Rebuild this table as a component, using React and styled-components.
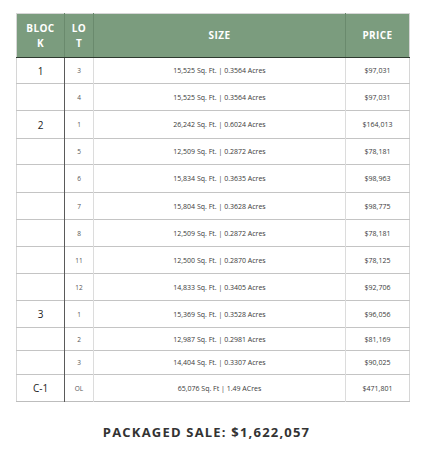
import React from "react";
import styled, { createGlobalStyle } from "styled-components";

const Global = createGlobalStyle`
  html, body { margin: 0; padding: 0; background: #fff; }
  body {
    font-family: "Open Sans", "Liberation Sans", sans-serif;
    -webkit-font-smoothing: antialiased;
  }
`;

const Page = styled.div`
  width: 439px;
  padding: 13px 0 0 16px;
  box-sizing: border-box;
`;

const Table = styled.table`
  border-collapse: collapse;
  table-layout: fixed;
  width: 393px;
  border: 1px solid #d6d6d6;
  border-bottom-color: #bdbdbd;
`;

const Th = styled.th`
  background: #7b9c7e;
  color: #fff;
  font-size: 10px;
  font-weight: 700;
  letter-spacing: 0.4px;
  line-height: 15px;
  height: 43px;
  padding: 0 ${(p) => p.$pad || 7}px;
  text-align: center;
  word-break: break-all;
  border-right: 1px solid #6a8a6d;
  border-bottom: 1px solid #2e3a2f;
  &:last-child { border-right: none; }
`;

const Tr = styled.tr`
  height: ${(p) => p.$h}px;
`;

const Td = styled.td`
  padding: 0;
  text-align: center;
  vertical-align: middle;
  border-top: 1px solid #c4c4c4;
  color: ${(p) => (p.$kind === "block" ? "#222" : p.$kind === "lot" ? "#555" : "#3a3a3a")};
  font-size: ${(p) => (p.$kind === "block" ? "10px" : p.$kind === "lot" ? "6.5px" : "7px")};
  border-right: 1px solid
    ${(p) => (p.$kind === "block" ? "#5a5a5a" : "#dcdcdc")};
  &:last-child { border-right: none; }
`;

const Footer = styled.div`
  width: 381px;
  margin-top: 21px;
  text-align: center;
  font-size: 13px;
  font-weight: 700;
  letter-spacing: 1.2px;
  color: #333;
`;

const rows = [
  ["1", "3", "15,525 Sq. Ft. | 0.3564 Acres", "$97,031", 26],
  ["", "4", "15,525 Sq. Ft. | 0.3564 Acres", "$97,031", 27],
  ["2", "1", "26,242 Sq. Ft. | 0.6024 Acres", "$164,013", 28],
  ["", "5", "12,509 Sq. Ft. | 0.2872 Acres", "$78,181", 26],
  ["", "6", "15,834 Sq. Ft. | 0.3635 Acres", "$98,963", 28],
  ["", "7", "15,804 Sq. Ft. | 0.3628 Acres", "$98,775", 27],
  ["", "8", "12,509 Sq. Ft. | 0.2872 Acres", "$78,181", 27],
  ["", "11", "12,500 Sq. Ft. | 0.2870 Acres", "$78,125", 27],
  ["", "12", "14,833 Sq. Ft. | 0.3405 Acres", "$92,706", 27],
  ["3", "1", "15,369 Sq. Ft. | 0.3528 Acres", "$96,056", 27],
  ["", "2", "12,987 Sq. Ft. | 0.2981 Acres", "$81,169", 23],
  ["", "3", "14,404 Sq. Ft. | 0.3307 Acres", "$90,025", 24],
  ["C-1", "OL", "65,076 Sq. Ft | 1.49 ACres", "$471,801", 27],
];

export default function App() {
  return (
    <Page>
      <Global />
      <Table>
        <colgroup>
          <col style={{ width: 48 }} />
          <col style={{ width: 29 }} />
          <col style={{ width: 252 }} />
          <col style={{ width: 64 }} />
        </colgroup>
        <thead>
          <tr>
            <Th>BLOCK</Th>
            <Th $pad={6}>LOT</Th>
            <Th>SIZE</Th>
            <Th>PRICE</Th>
          </tr>
        </thead>
        <tbody>
          {rows.map(([b, l, s, p, h], i) => (
            <Tr key={i} $h={h}>
              <Td $kind="block">{b}</Td>
              <Td $kind="lot">{l}</Td>
              <Td $kind="size">{s}</Td>
              <Td $kind="price">{p}</Td>
            </Tr>
          ))}
        </tbody>
      </Table>
      <Footer>PACKAGED SALE: $1,622,057</Footer>
    </Page>
  );
}
